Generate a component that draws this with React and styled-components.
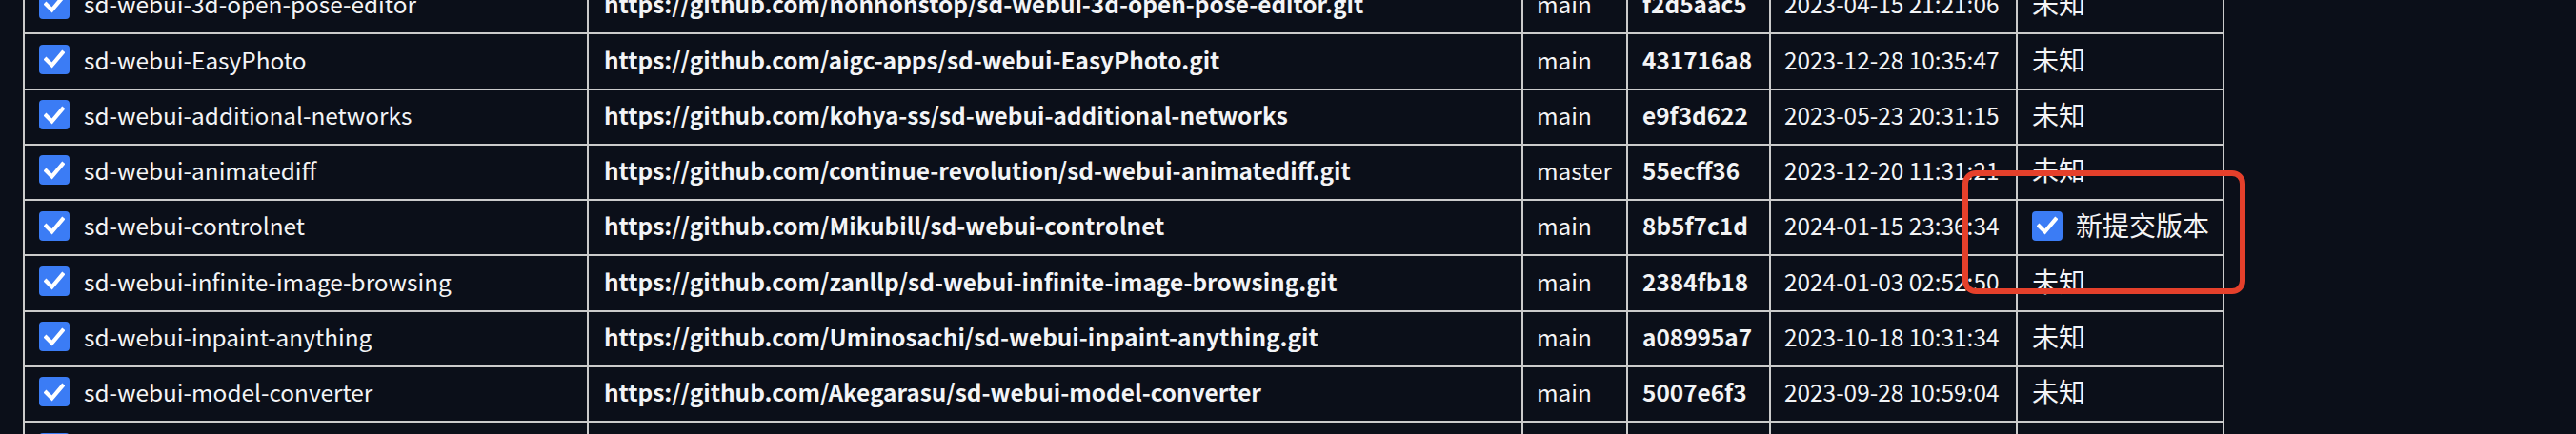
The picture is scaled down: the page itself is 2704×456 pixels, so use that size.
import React from "react";
import styled, {createGlobalStyle} from "styled-components";

const Global = createGlobalStyle`
  html, body {
    margin: 0;
    padding: 0;
    background: #0b0f19;
    overflow: hidden;
  }
  body {
    font-family: "Noto Sans CJK SC", "Noto Sans", sans-serif;
    color: #f3f4f6;
  }
`;

const Page = styled.div`
  position: relative;
  display: flow-root;
  width: 2704px;
  height: 456px;
  padding-left: 24px;
  box-sizing: border-box;
`;

const Table = styled.table`
  margin-top: -24px;
  border-collapse: collapse;
  table-layout: fixed;
  width: 2310px;
  font-size: 24.4px;
`;

const Row = styled.tr`
  height: 58.25px;
`;

const Cell = styled.td`
  border: 2px solid #cbcbcb;
  padding: 0 10px 4px ${p => p.$pad || 14}px;
  white-space: nowrap;
  overflow: hidden;
  vertical-align: middle;
  font-weight: ${p => (p.$bold ? 700 : 400)};
  line-height: 1.2;
`;

const Cjk = styled.span`
  font-size: 28px;
`;

const Inline = styled.div`
  display: flex;
  align-items: center;
  gap: ${p => p.$gap || 15}px;
`;

const Box = styled.span`
  flex: none;
  width: 32px;
  height: 31px;
  border-radius: 4px;
  background: #3b7cf5;
  display: flex;
  align-items: center;
  justify-content: center;
`;

const Highlight = styled.div`
  position: absolute;
  left: 2060px;
  top: 179px;
  width: 297px;
  height: 130px;
  box-sizing: border-box;
  border: 6px solid #e5402b;
  border-radius: 14px;
  pointer-events: none;
`;

function Check() {
    return (
        <Box>
            <svg width="22" height="20" viewBox="0 0 22 20">
                <path d="M2.5 10.5 L8.5 16.5 L19.5 3.5" fill="none" stroke="#fff"
                      strokeWidth="4.2" strokeLinecap="square" strokeLinejoin="miter"/>
            </svg>
        </Box>
    );
}

const rows = [
    ["sd-webui-3d-open-pose-editor", "https://github.com/nonnonstop/sd-webui-3d-open-pose-editor.git", "main", "f2d5aac5", "2023-04-15 21:21:06"],
    ["sd-webui-EasyPhoto", "https://github.com/aigc-apps/sd-webui-EasyPhoto.git", "main", "431716a8", "2023-12-28 10:35:47"],
    ["sd-webui-additional-networks", "https://github.com/kohya-ss/sd-webui-additional-networks", "main", "e9f3d622", "2023-05-23 20:31:15"],
    ["sd-webui-animatediff", "https://github.com/continue-revolution/sd-webui-animatediff.git", "master", "55ecff36", "2023-12-20 11:31:21"],
    ["sd-webui-controlnet", "https://github.com/Mikubill/sd-webui-controlnet", "main", "8b5f7c1d", "2024-01-15 23:36:34", true],
    ["sd-webui-infinite-image-browsing", "https://github.com/zanllp/sd-webui-infinite-image-browsing.git", "main", "2384fb18", "2024-01-03 02:52:50"],
    ["sd-webui-inpaint-anything", "https://github.com/Uminosachi/sd-webui-inpaint-anything.git", "main", "a08995a7", "2023-10-18 10:31:34"],
    ["sd-webui-model-converter", "https://github.com/Akegarasu/sd-webui-model-converter", "main", "5007e6f3", "2023-09-28 10:59:04"],
    ["sd-webui-openpose-editor", "https://github.com/huchenlei/sd-webui-openpose-editor", "main", "c9357715", "2023-11-24 14:50:28"],
];

export default function App() {
    return (
        <Page>
            <Global/>
            <Table>
                <colgroup>
                    <col style={{width: 592}}/>
                    <col style={{width: 981}}/>
                    <col style={{width: 110}}/>
                    <col style={{width: 150}}/>
                    <col style={{width: 259}}/>
                    <col style={{width: 217}}/>
                </colgroup>
                <tbody>
                {rows.map(([name, url, branch, hash, date, update]) => (
                    <Row key={name}>
                        <Cell $pad={15}>
                            <Inline><Check/><span>{name}</span></Inline>
                        </Cell>
                        <Cell $pad={16} $bold>{url}</Cell>
                        <Cell>{branch}</Cell>
                        <Cell $pad={15} $bold>{hash}</Cell>
                        <Cell>{date}</Cell>
                        <Cell $pad={15}>
                            {update
                                ? <Inline $gap={14}><Check/><Cjk>新提交版本</Cjk></Inline>
                                : <Cjk>未知</Cjk>}
                        </Cell>
                    </Row>
                ))}
                </tbody>
            </Table>
            <Highlight/>
        </Page>
    );
}
